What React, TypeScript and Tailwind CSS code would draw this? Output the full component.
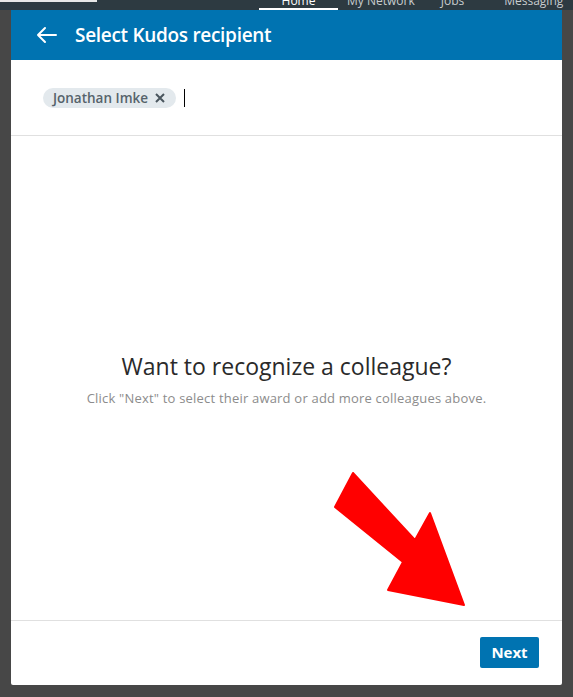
import React from "react";

export default function App() {
  return (
    <div
      className="relative w-[573px] h-[697px] overflow-hidden bg-[#474747] flex flex-col"
      style={{ fontFamily: '"Open Sans", "Noto Sans", sans-serif' }}
    >
      {/* dimmed top nav */}
      <div className="relative h-[10px] shrink-0 bg-[#2d3a41] overflow-hidden">
        <div className="absolute left-0 top-0 w-[97px] h-[2px] bg-[#e8e8e8]" />
        <div className="flex h-full items-end text-[12px] leading-[12px] text-[#c8ccce]">
          <div className="ml-[259px] w-[79px] h-full flex flex-col items-center justify-end">
            <span className="text-white mb-[1px]">Home</span>
            <div className="w-full h-[2px] bg-white shrink-0" />
          </div>
          <span className="ml-[9px] mb-[3px]">My Network</span>
          <span className="ml-[26px] mb-[3px]">Jobs</span>
          <span className="ml-[40px] mb-[3px]">Messaging</span>
        </div>
      </div>

      {/* modal */}
      <div className="ml-[11px] w-[551px] h-[675px] bg-white rounded-b-[2px] flex flex-col overflow-hidden">
        <div className="h-[50px] shrink-0 bg-[#0073b1] flex items-center">
          <svg
            className="ml-[25px]"
            width="22"
            height="18"
            viewBox="0 0 22 18"
            fill="none"
            stroke="#ffffff"
            strokeWidth="2"
            strokeLinecap="round"
            strokeLinejoin="round"
          >
            <path d="M20 9H2M9 2L2 9l7 7" />
          </svg>
          <span className="ml-[17px] text-white text-[19px] font-semibold tracking-[-0.3px]">
            Select Kudos recipient
          </span>
        </div>

        <div className="h-[76px] shrink-0 border-b border-[#e0e0e0] flex items-center pl-[32px] pt-[1px]">
          <div className="h-[20px] rounded-full bg-[#e3e9ed] flex items-center pl-[10px] pr-[11px] text-[13.5px] font-semibold text-[#56636b]">
            <span>Jonathan Imke</span>
            <svg className="ml-[7px]" width="10" height="10" viewBox="0 0 10 10" stroke="#4a565e" strokeWidth="2">
              <path d="M1 1l8 8M9 1l-8 8" />
            </svg>
          </div>
          <div className="ml-[8px] w-[1px] h-[18px] bg-black" />
        </div>

        <div className="flex-1 flex flex-col items-center pt-[215px]">
          <div className="text-[23px] leading-[30px] text-[#2a2a2a] tracking-[0px]">
            Want to recognize a colleague?
          </div>
          <div className="mt-[8px] text-[13px] leading-[18px] text-[#8c8c8c] tracking-[0.2px]">
            Click "Next" to select their award or add more colleagues above.
          </div>
        </div>

        <div className="h-[65px] shrink-0 border-t border-[#e0e0e0] flex items-start justify-end pt-[16px] pr-[23px]">
          <button className="w-[59px] h-[31px] rounded-[2px] bg-[#0073b1] text-white text-[15px] font-bold">
            Next
          </button>
        </div>
      </div>

      {/* red annotation arrow */}
      <svg className="absolute left-0 top-0 pointer-events-none" width="573" height="697">
        <polygon
          points="353,473 415,540 430,513 464,605 388,590 403,562 335,507"
          fill="#ff0000"
          stroke="#ff0000"
          strokeWidth="2"
          strokeLinejoin="round"
        />
      </svg>
    </div>
  );
}
